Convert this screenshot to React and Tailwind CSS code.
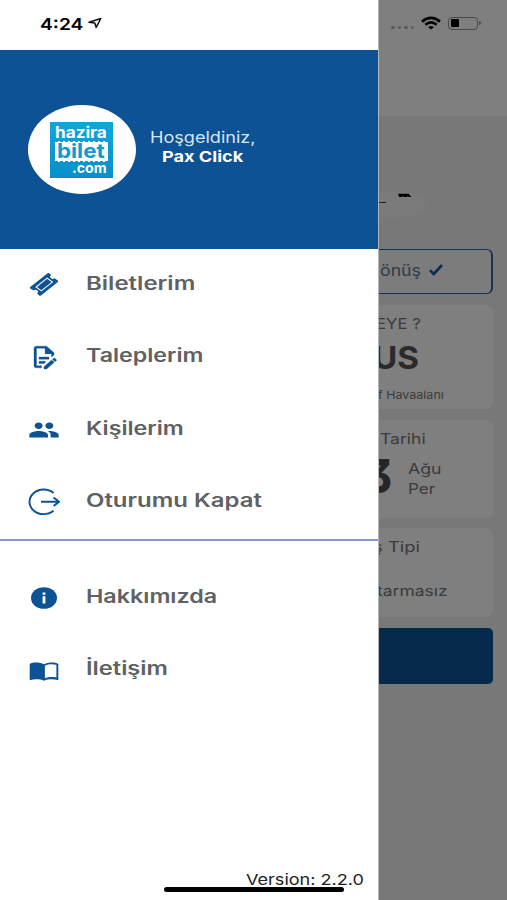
import { useLayoutEffect, useRef } from "react";
import clsx from "clsx";

// Stretches a single line of text to the width of its box.
function Fit({ className, children }) {
  const box = useRef(null);
  const text = useRef(null);
  useLayoutEffect(() => {
    const scale = box.current.clientWidth / text.current.offsetWidth;
    text.current.style.transform = `scaleX(${scale})`;
  }, [children]);
  return (
    <div ref={box} className={clsx("shrink-0 whitespace-nowrap", className)}>
      <span ref={text} className="inline-block origin-left">
        {children}
      </span>
    </div>
  );
}

function Icon({ className, viewBox = "0 0 24 24", children }) {
  return (
    <svg viewBox={viewBox} preserveAspectRatio="none" className={className} fill="currentColor">
      {children}
    </svg>
  );
}

const TicketIcon = (
  <Icon className="h-[25px] w-[30px]" viewBox="0 0 30 26">
    <path d="M20.2 1.2 22.2 3A2.3 2 0 0 0 25.6 6.6L28.8 8.8Q29.6 9.6 28.8 10.4L11.9 24.4Q11 25.1 10.2 24.4L8.2 22.4A2.3 2 0 0 0 4.9 19.2L1.2 17.2Q.3 16.4 1.2 15.6L18.7 1.3Q19.5.6 20.2 1.2Z" />
    <path d="M18.2 6.4 23.4 10.5 12.2 19.6 7.1 15.6Z" fill="none" stroke="#fff" strokeWidth="1.1" />
  </Icon>
);

const RequestIcon = (
  <Icon className="h-[26px] w-[30px]">
    <path stroke="currentColor" strokeWidth=".3" d="M8 12H16V14H8V12M10 20H6V4H13V9H18V12.1L20 10.1V8L14 2H6A2 2 0 0 0 4 4V20A2 2 0 0 0 6 22H10V20M8 18H12.1L13 17.1V16H8V18M20.2 13C20.3 13 20.5 13.1 20.6 13.2L21.9 14.5C22.1 14.7 22.1 15.1 21.9 15.3L20.9 16.3L18.8 14.2L19.8 13.2C19.9 13.1 20 13 20.2 13M20.2 16.9L14.1 23H12V20.9L18.1 14.8L20.2 16.9Z" />
    <path d="M13 2.5V9H19.5Z" />
  </Icon>
);

const PeopleIcon = (
  <Icon className="h-[26px] w-[32px]">
    <path d="M16 11c1.66 0 2.99-1.34 2.99-3S17.66 5 16 5c-1.66 0-3 1.34-3 3s1.34 3 3 3zm-8 0c1.66 0 2.99-1.34 2.99-3S9.66 5 8 5C6.34 5 5 6.34 5 8s1.34 3 3 3zm0 2c-2.33 0-7 1.17-7 3.5V19h14v-2.5c0-2.33-4.67-3.5-7-3.5zm8 0c-.29 0-.62.02-.97.05 1.16.84 1.97 1.97 1.97 3.45V19h6v-2.5c0-2.33-4.67-3.5-7-3.5z" />
  </Icon>
);

const LogoutIcon = (
  <Icon className="h-[28px] w-[32px]" viewBox="0 0 32 28">
    <g fill="none" stroke="currentColor" strokeWidth="1.9">
      <path d="M25.6 4.9A14.3 12.3 0 1 0 25.6 22.8" />
      <path d="M13 13.8H30.5M25.6 9.6 31 13.8 25.6 18" />
    </g>
  </Icon>
);

const InfoIcon = (
  <Icon className="h-[22px] w-[26px]" viewBox="0 0 26 22">
    <ellipse cx="13" cy="11" rx="13" ry="10.8" />
    <path fill="#fff" d="M11.6 5.4h2.8v2.4h-2.8zM11.6 9.3h2.8v7.2h-2.8z" />
  </Icon>
);

const BookIcon = (
  <Icon className="mt-[2px] h-[19px] w-[30px]" viewBox="0 0 30 19">
    <path d="M15 2.3C10.8.1 4.3.1.7 1.9v16.4C5 16.9 11 16.9 15 18.8 19 16.9 25 16.9 29.3 18.3V1.9C25.7.1 19.2.1 15 2.3ZM27.4 15.4C23 14.7 19 15 15.9 16.2V3.7C19 2.2 23.2 1.9 27.4 2.8Z" fillRule="evenodd" />
  </Icon>
);

function MenuRow({ icon, label, width }) {
  return (
    <li className="flex h-[68px] items-center">
      <span className="flex w-[86px] justify-center pt-[3px] pl-px text-[#0c5294]">{icon}</span>
      <Fit className={clsx("-mt-px text-[18.5px] leading-6 font-semibold text-[#606163]", width)}>{label}</Fit>
    </li>
  );
}

function Logo() {
  return (
    <div className="flex h-[89px] w-[108px] items-center justify-center rounded-[50%] bg-white">
      <div className="-ml-[2px] flex h-[56px] w-[63px] flex-col bg-linear-to-b from-[#12a5dc] to-[#078fc9] font-bold">
        <Fit className="mt-[4px] ml-[5px] h-[14px] w-[52px] text-[15.5px] leading-[14px] text-white">hazira</Fit>
        <div className="mx-[5px] mt-px flex h-[21px] border-y border-dashed border-[#0d9bd4] bg-white">
          <Fit className="ml-[2px] w-[48px] text-[20px] leading-[19px] font-bold text-[#0d9bd4]">bilet</Fit>
        </div>
        <Fit className="ml-[22px] h-[14px] w-[35px] text-[14.5px] leading-[12px] text-white">.com</Fit>
      </div>
    </div>
  );
}

function Drawer() {
  return (
    <aside className="absolute inset-y-0 left-0 flex w-[379px] flex-col border-r border-[#b5b5b5] bg-white">
      <div className="flex h-[50px] items-start pt-[14px] pl-[40px]">
        <Fit className="w-[43px] text-[16.5px] leading-[20px] font-semibold text-black">4:24</Fit>
        <svg viewBox="0 0 14 12" className="mt-[3px] ml-[5px] h-[12px] w-[14px]" fill="none" stroke="#111" strokeWidth="1.5" strokeLinejoin="round">
          <path d="M12.8 1.5 1 5.3 6.8 6.1 8.2 10.4Z" />
        </svg>
      </div>
      <header className="flex h-[199px] items-center bg-[#0c5294] pl-[28px]">
        <Logo />
        <div className="-mt-[4px] ml-[14px] flex flex-col text-white">
          <Fit className="w-[105px] text-[15.5px] leading-5 text-[#d8e6f3]">Hoşgeldiniz,</Fit>
          <Fit className="-mt-px ml-[12px] w-[81px] text-[15px] leading-5 font-bold">Pax Click</Fit>
        </div>
      </header>
      <ul className="flex flex-col gap-[4.5px]">
        <MenuRow icon={TicketIcon} label="Biletlerim" width="w-[109px]" />
        <MenuRow icon={RequestIcon} label="Taleplerim" width="w-[118px]" />
        <MenuRow icon={PeopleIcon} label="Kişilerim" width="w-[98px]" />
        <MenuRow icon={LogoutIcon} label="Oturumu Kapat" width="w-[176px]" />
      </ul>
      <div className="mt-[4px] h-[2px] bg-[#8797c9]" />
      <ul className="mt-[22px] flex flex-col gap-[4px]">
        <MenuRow icon={InfoIcon} label="Hakkımızda" width="w-[131px]" />
        <MenuRow icon={BookIcon} label="İletişim" width="w-[82px]" />
      </ul>
      <Fit className="mt-auto mb-[10px] ml-[246px] w-[118px] text-[15px] leading-5 text-[#222]">Version: 2.2.0</Fit>
      <div className="absolute bottom-[8px] left-[164px] h-[5px] w-[180px] rounded-full bg-black" />
    </aside>
  );
}

function StatusIcons() {
  return (
    <div className="absolute top-[16px] left-[391px] flex items-center">
      <div className="mt-[8px] flex gap-[3px]">
        {[0, 1, 2, 3].map((i) => (
          <i key={i} className="h-[3px] w-[3.5px] rounded-full bg-[#5c5c5c]" />
        ))}
      </div>
      <svg viewBox="0 0 20 14" className="ml-[7px] h-[14px] w-[20px]" fill="none" stroke="#000" strokeWidth="2.7">
        <path d="M1 5.6Q10-1.8 19 5.6M4.3 8.8Q10 4.1 15.7 8.8" />
        <path d="M7.2 11.2Q10 8.9 12.8 11.2L10 13.6Z" fill="#000" stroke="none" />
      </svg>
      <div className="ml-[7px] h-[13px] w-[30px] rounded-[4px] border border-[#4a4a4a] p-[1.5px]">
        <div className="h-full w-[8px] rounded-[1px] bg-black" />
      </div>
      <i className="ml-px h-[4px] w-[2px] rounded-r-full bg-[#4a4a4a]" />
    </div>
  );
}

function SearchPage() {
  return (
    <main className="h-[900px] bg-[#f0f0f0] pr-[14px] text-[#777]">
      <div className="-mr-[14px] h-[116px] bg-white" />
      <div className="flex h-[133px] items-start pt-[76px] pl-[376px]">
        <div className="flex h-[25px] w-[50px] bg-linear-to-r from-[#f8f8f8] to-[#f4f4f4] [border-radius:0_50%_50%_0]">
          <div className="mt-[10px] h-px w-[10px] shrink-0 bg-[#444]" />
          <svg viewBox="0 0 15 5" className="mt-[1px] ml-[11px] h-[5px] w-[15px] shrink-0">
            <path d="M1 .8H11.5L14.5 4H12L10.6 3.2 9.9 4H7L6 3.2 5.2 4H2Z" fill="#000" />
          </svg>
        </div>
      </div>
      <section className="flex h-[45px] items-center rounded-[6px] border-[1.5px] border-r-2 border-[#2468ad] bg-[#f8f8f8] pl-[379px] text-[#5c7896]">
        <Fit className="-mt-[3px] w-[41px] text-[16px] leading-5">önüş</Fit>
        <svg viewBox="0 0 14 12" className="-mt-[3px] ml-[8px] h-[12px] w-[14px]" fill="none" stroke="#1c5c9e" strokeWidth="2.6">
          <path d="M1 6.2 4.8 10 13 1" />
        </svg>
      </section>
      <section className="mt-[11px] h-[104px] rounded-[8px] bg-white pt-[9px]">
        <Fit className="ml-[376px] w-[45px] text-[14.5px] leading-5">EYE ?</Fit>
        <Fit className="mt-[8px] ml-[373px] w-[46px] text-[31px] leading-[31px] font-bold text-[#555]">US</Fit>
        <Fit className="mt-[14px] ml-[378px] w-[66px] text-[11px] leading-4">f Havaalanı</Fit>
      </section>
      <section className="mt-[11px] h-[98px] rounded-[8px] bg-white pt-[9px]">
        <Fit className="ml-[380px] w-[46px] text-[14.5px] leading-5">Tarihi</Fit>
        <div className="flex">
          <Fit className="ml-[366px] w-[26px] text-[47px] leading-[54px] font-extrabold text-[#4c4c4c] [font-feature-settings:'cv09']">3</Fit>
          <div className="mt-[10px] ml-[16px] text-[14.5px] leading-5">
            <Fit className="w-[33px]">Ağu</Fit>
            <Fit className="w-[27px]">Per</Fit>
          </div>
        </div>
      </section>
      <section className="mt-[10px] h-[89px] rounded-[8px] bg-white pt-[9px]">
        <Fit className="ml-[373px] w-[47px] text-[14.5px] leading-5">ş Tipi</Fit>
        <Fit className="mt-[24px] ml-[377px] w-[71px] text-[14.5px] leading-5">tarmasız</Fit>
      </section>
      <div className="mt-[11px] h-[56px] rounded-[5px] bg-[#0a5496]" />
    </main>
  );
}

export default function App() {
  return (
    <div className="relative h-[900px] w-[507px] overflow-hidden font-['Inter','Liberation_Sans',sans-serif]">
      <SearchPage />
      <div className="absolute inset-0 bg-black/50" />
      <StatusIcons />
      <Drawer />
    </div>
  );
}
